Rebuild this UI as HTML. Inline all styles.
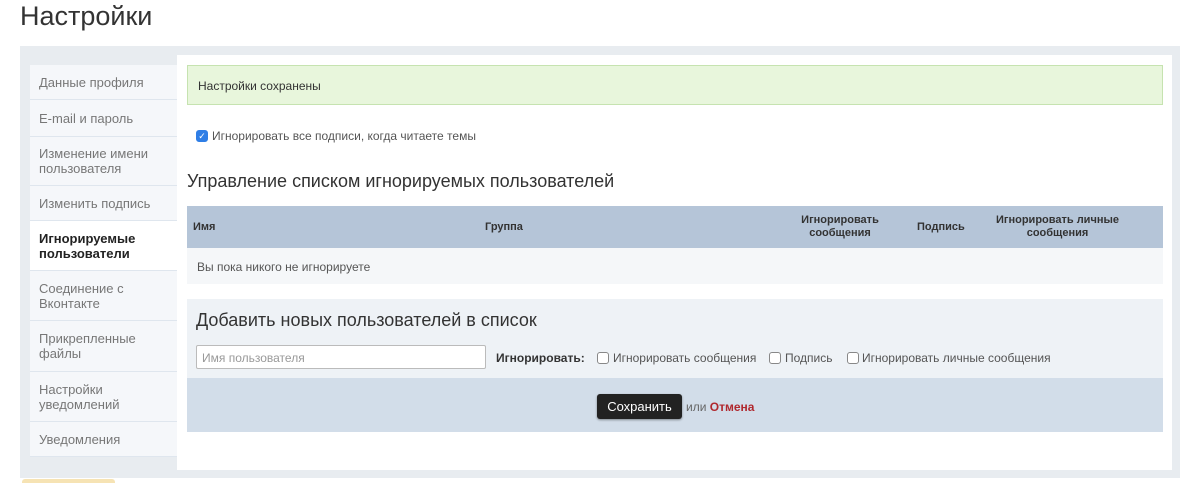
<!DOCTYPE html>
<html><head><meta charset="utf-8"><style>
*{box-sizing:border-box;margin:0;padding:0}
body{width:1200px;height:483px;overflow:hidden;background:#fff;font-family:"Liberation Sans",sans-serif;position:relative;color:#333}
.a{position:absolute}
h1{position:absolute;left:20px;top:1px;font-size:27px;font-weight:normal;color:#333}
.panel{left:20px;top:46px;width:1160px;height:432px;background:#e8ecf0}
.side{left:30px;top:65px;width:147px}
.it{border-bottom:1px solid #dfe6ee;background:#f5f7fa;color:#777;font-size:13px;padding:0 9px;display:flex;align-items:center;line-height:15px}
.it.act{background:#fff;color:#222;font-weight:bold}
.main{left:177px;top:55px;width:995px;height:415px;background:#fff}
.cb{position:absolute;width:12px;height:12px;border:1px solid #888;border-radius:3px;background:#fff}
.lb{position:absolute;font-size:12px;color:#555;white-space:nowrap}
</style></head><body>
<h1>Настройки</h1>
<div class="a panel"></div>
<div class="a side">
<div class="it" style="height:35px">Данные профиля</div>
<div class="it" style="height:37px">E-mail и пароль</div>
<div class="it" style="height:49px">Изменение имени пользователя</div>
<div class="it" style="height:35px">Изменить подпись</div>
<div class="it act" style="height:50px">Игнорируемые пользователи</div>
<div class="it" style="height:50px">Соединение с Вконтакте</div>
<div class="it" style="height:51px">Прикрепленные файлы</div>
<div class="it" style="height:50px">Настройки уведомлений</div>
<div class="it" style="height:35px">Уведомления</div>
</div>
<div class="a main"></div>
<div class="a" style="left:187px;top:65px;width:976px;height:40px;background:#e8f6dc;border:1px solid #c6e3b0;font-size:12px;color:#333;padding:13px 10px">Настройки сохранены</div>
<div class="cb" style="left:196px;top:130px;background:#2f7ee6;border-color:#2f7ee6;color:#fff;font-size:9px;line-height:10px;text-align:center">✓</div>
<div class="lb" style="left:212px;top:129px">Игнорировать все подписи, когда читаете темы</div>
<div class="a" style="left:187px;top:171px;font-size:18px;color:#333">Управление списком игнорируемых пользователей</div>
<div class="a" style="left:187px;top:206px;width:976px;height:42px;background:#b5c5d8"></div>
<div class="a" style="left:193px;top:221px;font-size:11px;font-weight:bold;color:#333">Имя</div>
<div class="a" style="left:485px;top:221px;font-size:11px;font-weight:bold;color:#333">Группа</div>
<div class="a" style="left:790px;top:214px;width:100px;text-align:center;font-size:11px;font-weight:bold;line-height:13px">Игнорировать сообщения</div>
<div class="a" style="left:917px;top:221px;font-size:11px;font-weight:bold">Подпись</div>
<div class="a" style="left:990px;top:214px;width:135px;text-align:center;font-size:11px;font-weight:bold;line-height:13px">Игнорировать личные сообщения</div>
<div class="a" style="left:187px;top:248px;width:976px;height:36px;background:#f5f7f9;font-size:12px;color:#555;padding:12px 10px">Вы пока никого не игнорируете</div>
<div class="a" style="left:187px;top:299px;width:976px;height:79px;background:#eef2f6"></div>
<div class="a" style="left:196px;top:310px;font-size:18px;color:#333">Добавить новых пользователей в список</div>
<div class="a" style="left:196px;top:345px;width:290px;height:24px;background:#fff;border:1px solid #bbb;border-radius:2px;font-size:12px;color:#999;padding:5px 5px">Имя пользователя</div>
<div class="lb" style="left:496px;top:351px;font-weight:bold;color:#333">Игнорировать:</div>
<div class="cb" style="left:597px;top:352px"></div>
<div class="lb" style="left:613px;top:351px">Игнорировать сообщения</div>
<div class="cb" style="left:769px;top:352px"></div>
<div class="lb" style="left:785px;top:351px">Подпись</div>
<div class="cb" style="left:847px;top:352px"></div>
<div class="lb" style="left:862px;top:351px">Игнорировать личные сообщения</div>
<div class="a" style="left:187px;top:378px;width:976px;height:54px;background:#d2dde9"></div>
<div class="a" style="left:597px;top:394px;width:85px;height:25px;background:#222;border-radius:3px;color:#fff;font-size:13px;text-align:center;line-height:25px;box-shadow:0 1px 2px rgba(0,0,0,.4)">Сохранить</div>
<div class="a" style="left:686px;top:400px;font-size:12px;color:#666">или <b style="color:#b0282e">Отмена</b></div>
<div class="a" style="left:22px;top:479px;width:93px;height:4px;background:#f6e3b4;border-radius:3px 3px 0 0"></div>
</body></html>
